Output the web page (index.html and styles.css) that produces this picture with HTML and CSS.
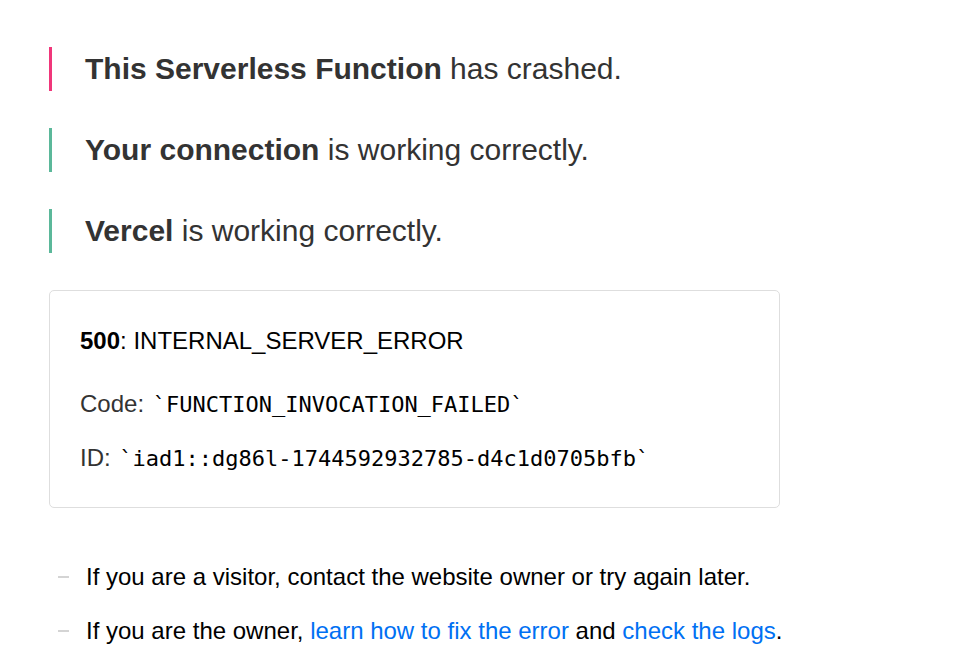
FILE: index.html
```html
<!DOCTYPE html>
<html>
<head>
<meta charset="utf-8">
<link rel="stylesheet" href="styles.css">
</head>
<body>
<main class="page">
  <section class="notes">
    <p class="note note-error"><strong>This Serverless Function</strong> has crashed.</p>
    <p class="note note-ok"><strong>Your connection</strong> is working correctly.</p>
    <p class="note note-ok"><strong>Vercel</strong> is working correctly.</p>
  </section>
  <section class="devinfo">
    <p class="error-code"><strong>500</strong>: INTERNAL_SERVER_ERROR</p>
    <p class="devinfo-line">Code: <code>`FUNCTION_INVOCATION_FAILED`</code></p>
    <p class="devinfo-line">ID: <code>`iad1::dg86l-1744592932785-d4c1d0705bfb`</code></p>
  </section>
  <ul class="help">
    <li>If you are a visitor, contact the website owner or try again later.</li>
    <li>If you are the owner, <a href="#">learn how to fix the error</a> and <a href="#">check the logs</a>.</li>
  </ul>
</main>
</body>
</html>
```
FILE: styles.css
```css
html, body {
  margin: 0;
  padding: 0;
  background: #fff;
}
body {
  font-family: "Liberation Sans", Arial, sans-serif;
  color: #000;
}
.page {
  padding: 47px 0 0 49px;
  width: 731px;
}
.notes {
  display: flex;
  flex-direction: column;
  gap: 37px;
}
.note {
  margin: 0;
  border-left: 3px solid #5bb89a;
  padding-left: 33px;
  font-size: 30px;
  line-height: 44px;
  color: #333;
}
.note-error {
  border-left-color: #f0367a;
}
.note strong {
  font-weight: bold;
}
.devinfo {
  margin-top: 37px;
  border: 1px solid #dedede;
  border-radius: 5px;
  padding: 32px 30px 30px 30px;
  display: flex;
  flex-direction: column;
}
.error-code {
  margin: 0 0 27px 0;
  font-size: 24px;
  line-height: 36px;
  color: #000;
}
.devinfo-line {
  margin: 0;
  font-size: 24px;
  line-height: 36px;
  color: #333;
}
.devinfo-line + .devinfo-line {
  margin-top: 17px;
}
.devinfo-line code {
  font-family: "DejaVu Sans Mono", monospace;
  font-size: 22px;
  color: #000;
  margin-left: 2px;
}
.help {
  list-style: none;
  margin: 54px 0 0 0;
  padding: 0;
  display: flex;
  flex-direction: column;
  gap: 24px;
}
.help li {
  display: flex;
  align-items: center;
  font-size: 24px;
  line-height: 30px;
  color: #000;
  white-space: pre;
}
.help li::before {
  content: "";
  width: 11px;
  height: 2px;
  background: #d4d4d4;
  margin: 0 17px 0 9px;
  flex: none;
}
.help a {
  color: #0070f3;
  text-decoration: none;
}
```
